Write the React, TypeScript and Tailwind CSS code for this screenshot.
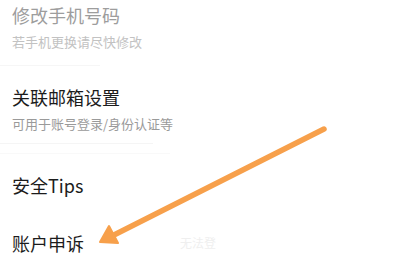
import React from 'react';

export default function App() {
    return (
        <div
            className="relative w-[400px] h-[258px] overflow-hidden bg-white"
            style={{ fontFamily: '"Noto Sans CJK SC", "Noto Sans", sans-serif' }}
        >
            <div className="flex flex-col pl-[12px]">
                {/* 修改手机号码 */}
                <div className="h-[31px] leading-[31px] text-[18px] text-[#9d9d9d]">修改手机号码</div>
                <div className="h-[22px] leading-[22px] text-[13px] text-[#c2c2c2]">若手机更换请尽快修改</div>
                <div className="mt-[12px] -ml-[12px] h-px w-[100px] bg-[#f6f6f6]" />

                {/* 关联邮箱设置 */}
                <div className="mt-[19px] h-[24px] leading-[24px] text-[18px] text-[#1c1c1c]">关联邮箱设置</div>
                <div className="mt-[5px] h-[20px] leading-[20px] text-[13px] text-[#9a9a9a]">可用于账号登录/身份认证等</div>
                <div className="mt-[9px] -ml-[12px] h-px w-[153px] bg-[#f5f5f5]" />
                <div className="mt-[9px] -ml-[12px] h-px w-[170px] bg-[#f9f9f9]" />

                {/* 安全Tips */}
                <div className="mt-[19px] h-[24px] leading-[24px] text-[18px] text-[#1c1c1c]">安全Tips</div>

                {/* 账户申诉 */}
                <div className="mt-[34px] flex items-center h-[24px]">
                    <span className="leading-[24px] text-[18px] text-[#1c1c1c]">账户申诉</span>
                    <span className="ml-[96px] text-[12px] text-[#efefef]">无法登</span>
                </div>
            </div>

            {/* orange annotation arrow */}
            <svg className="absolute left-0 top-0" width="400" height="258" viewBox="0 0 400 258">
                <line x1="324" y1="129" x2="108" y2="238" stroke="#f7a04b" strokeWidth="5.5" strokeLinecap="round" />
                <polygon points="100,242 109,226 118,243" fill="#f7a04b" stroke="#f7a04b" strokeWidth="2" strokeLinejoin="round" />
            </svg>
        </div>
    );
}
